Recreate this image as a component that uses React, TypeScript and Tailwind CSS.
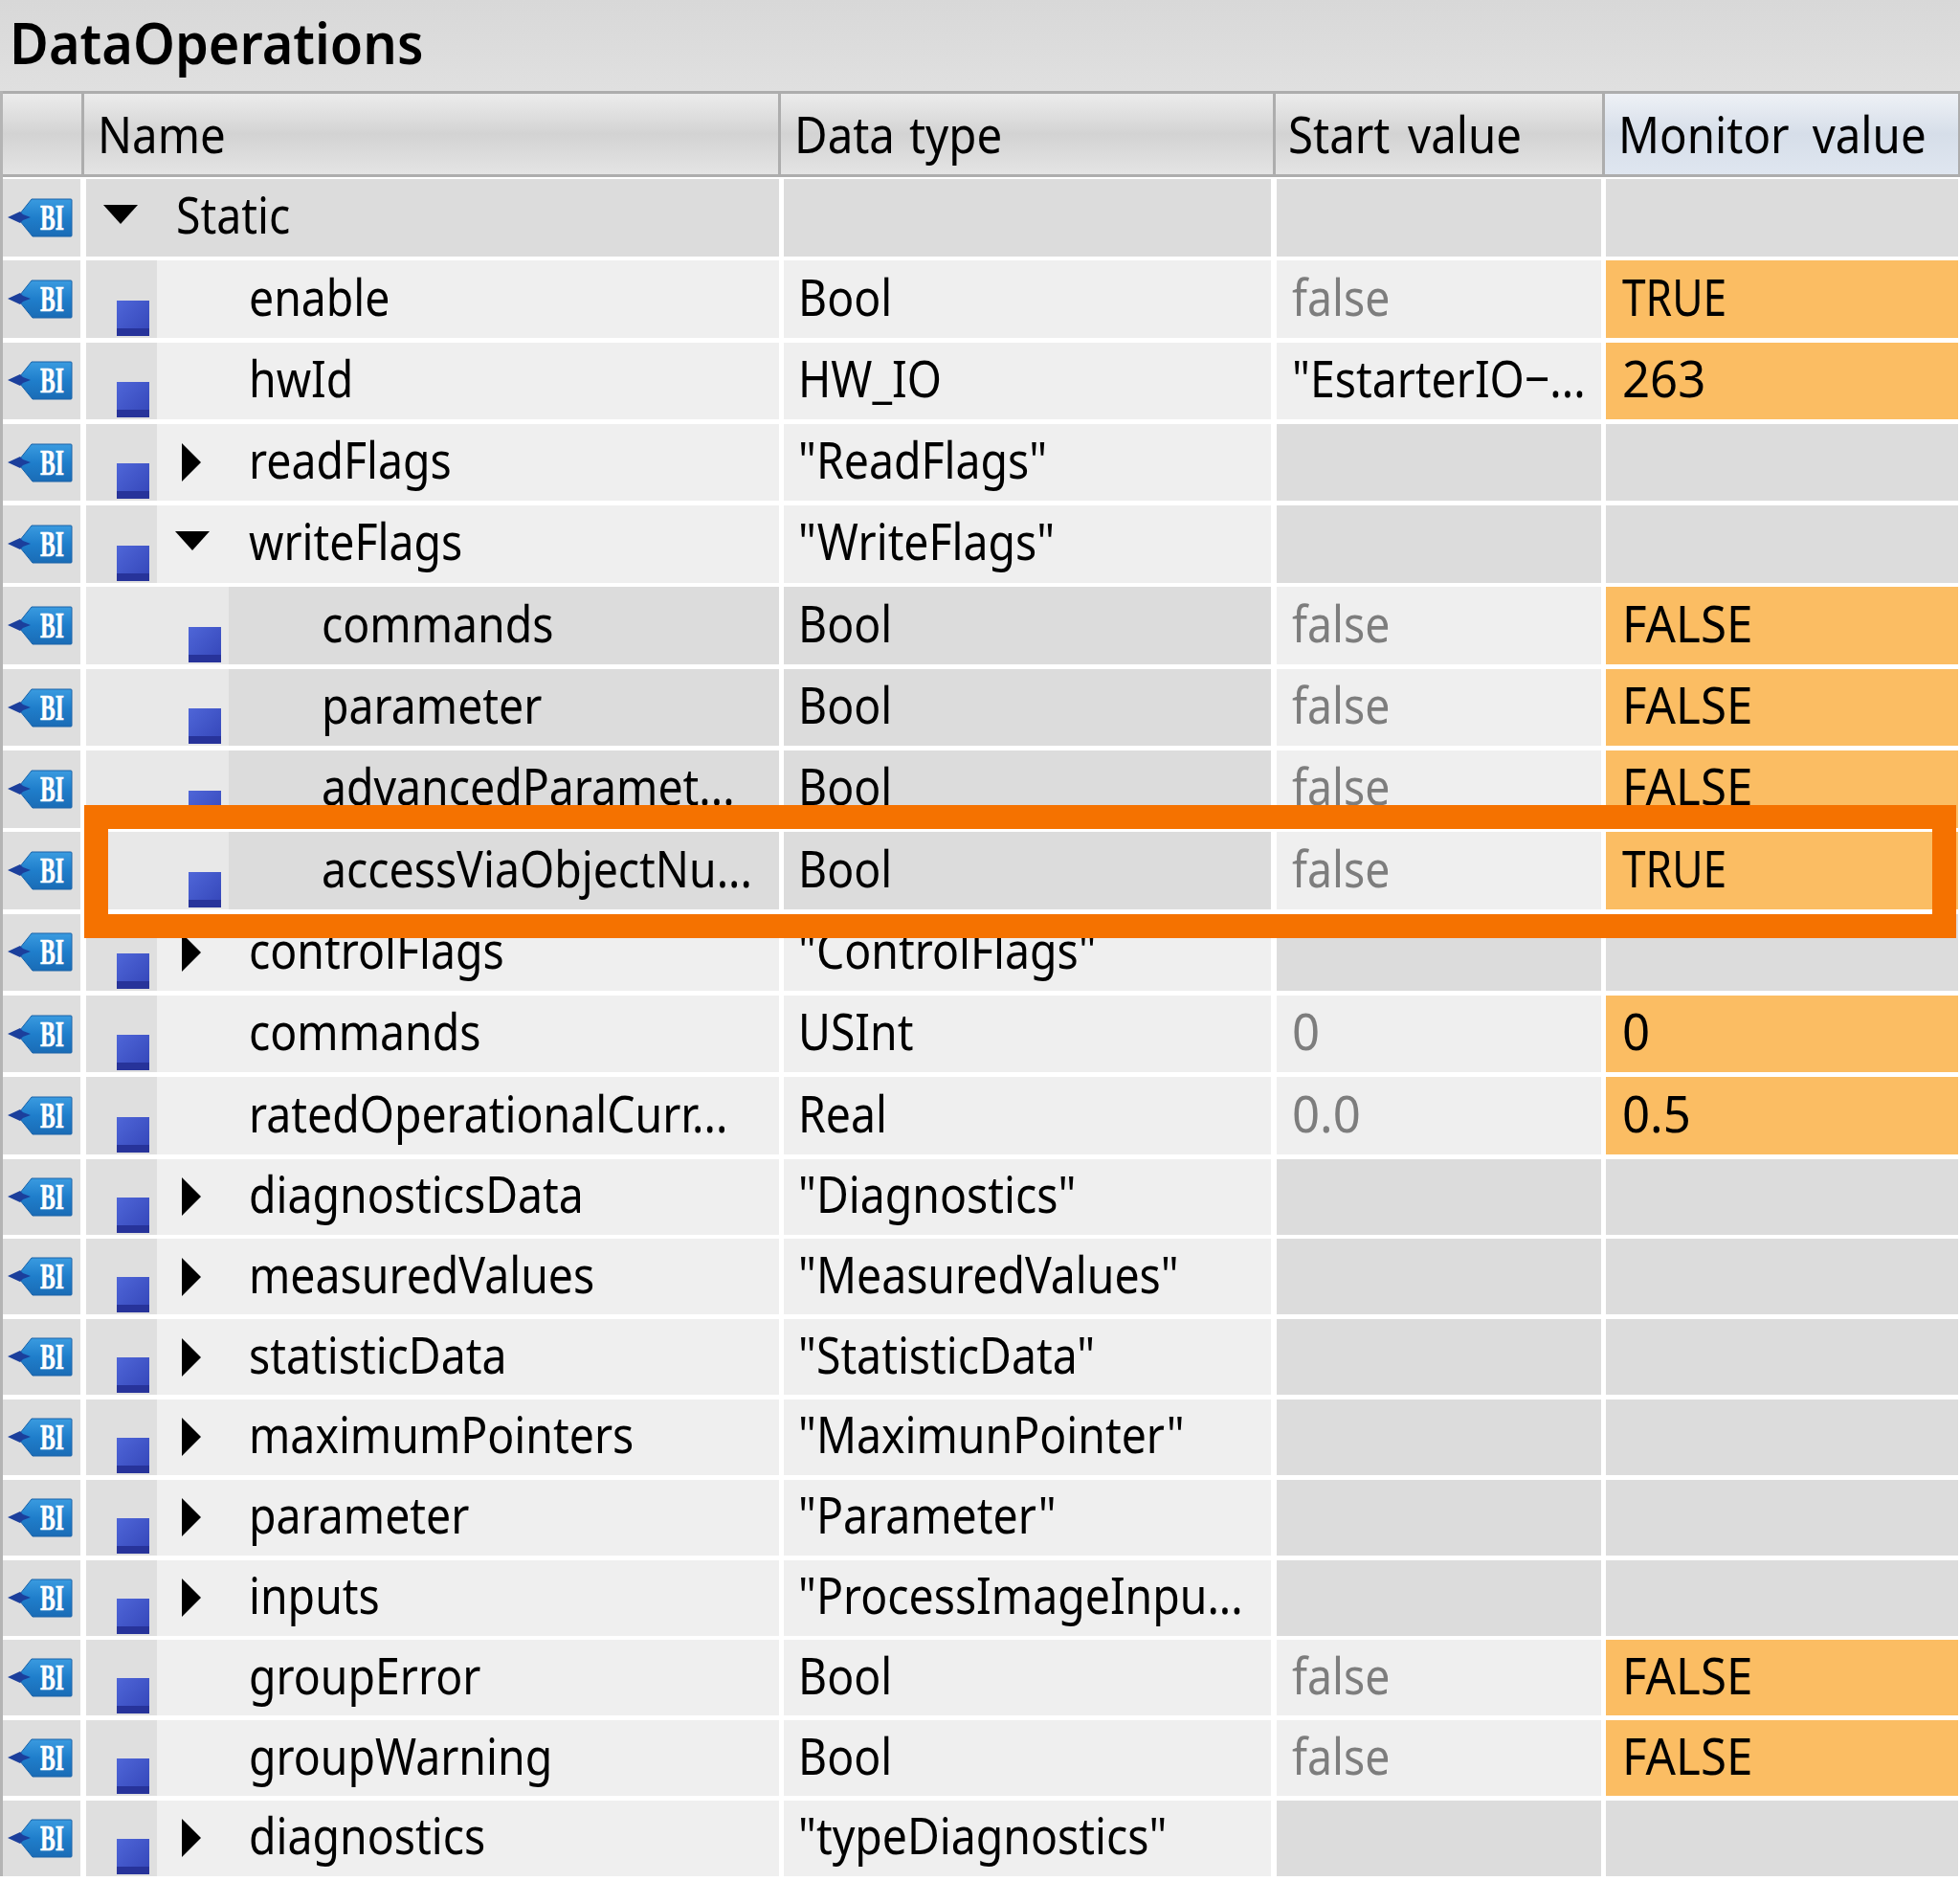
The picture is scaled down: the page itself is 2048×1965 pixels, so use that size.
import { FC } from "react";

interface IRow {
  name: string;
  type?: string;
  start?: string;
  monitor?: string;
  level: 0 | 1 | 2;
  arrow?: "down" | "right";
  dim?: boolean;
}

const rows: IRow[] = [
  { name: "Static", level: 0, arrow: "down" },
  { name: "enable", type: "Bool", start: "false", monitor: "TRUE", level: 1, dim: true },
  { name: "hwId", type: "HW_IO", start: '"EstarterIO−...', monitor: "263", level: 1 },
  { name: "readFlags", type: '"ReadFlags"', level: 1, arrow: "right" },
  { name: "writeFlags", type: '"WriteFlags"', level: 1, arrow: "down" },
  { name: "commands", type: "Bool", start: "false", monitor: "FALSE", level: 2, dim: true },
  { name: "parameter", type: "Bool", start: "false", monitor: "FALSE", level: 2, dim: true },
  { name: "advancedParamet...", type: "Bool", start: "false", monitor: "FALSE", level: 2, dim: true },
  { name: "accessViaObjectNu...", type: "Bool", start: "false", monitor: "TRUE", level: 2, dim: true },
  { name: "controlFlags", type: '"ControlFlags"', level: 1, arrow: "right" },
  { name: "commands", type: "USInt", start: "0", monitor: "0", level: 1, dim: true },
  { name: "ratedOperationalCurr...", type: "Real", start: "0.0", monitor: "0.5", level: 1, dim: true },
  { name: "diagnosticsData", type: '"Diagnostics"', level: 1, arrow: "right" },
  { name: "measuredValues", type: '"MeasuredValues"', level: 1, arrow: "right" },
  { name: "statisticData", type: '"StatisticData"', level: 1, arrow: "right" },
  { name: "maximumPointers", type: '"MaximunPointer"', level: 1, arrow: "right" },
  { name: "parameter", type: '"Parameter"', level: 1, arrow: "right" },
  { name: "inputs", type: '"ProcessImageInpu...', level: 1, arrow: "right" },
  { name: "groupError", type: "Bool", start: "false", monitor: "FALSE", level: 1, dim: true },
  { name: "groupWarning", type: "Bool", start: "false", monitor: "FALSE", level: 1, dim: true },
  { name: "diagnostics", type: '"typeDiagnostics"', level: 1, arrow: "right" },
];

const Label: FC<{ text: string; scale?: string; className?: string }> = ({
  text,
  scale = "scale-x-[0.875]",
  className = "",
}) => (
  <span className={`block origin-left whitespace-nowrap pb-[6px] text-[53px] leading-[60px] ${scale} ${className}`}>
    {text}
  </span>
);

// the value font has wider digits and capitals than Noto Sans in places
const valueScale = (text: string) => {
  if (text === "FALSE") return "scale-x-[0.93]";
  if (text === "TRUE") return "scale-x-[0.835]";
  if (/^[0-9.]+$/.test(text)) return "scale-x-[0.96]";
  return "scale-x-[0.875]";
};

const TagIcon = () => (
  <svg width="70" height="42" viewBox="0 0 70 42" className="ml-[4px] mt-[1px]">
    <defs>
      <linearGradient id="tagFill" x1="0" y1="0" x2="0" y2="1">
        <stop offset="0" stopColor="#3a9be0" />
        <stop offset="0.5" stopColor="#1f7ecb" />
        <stop offset="1" stopColor="#1a6cb6" />
      </linearGradient>
    </defs>
    <path d="M26 1H67a1 1 0 0 1 1 1V39a1 1 0 0 1-1 1H27L14 24 12 20 14 16Z" fill="url(#tagFill)" stroke="#1a62a8" strokeWidth="1" />
    <path d="M1 20 14 14 17 17 25 20 17 23 14 26Z" fill="#1b3f9c" />
    <text transform="translate(35 33) scale(0.62 1)" fill="#ffffff" stroke="#ffffff" strokeWidth="0.6" fontFamily="'Liberation Serif', serif" fontWeight="700" fontSize="38">
      BI
    </text>
  </svg>
);

const BlueSquare = () => (
  <div className="flex h-[37px] w-[34px] flex-col bg-gradient-to-br from-[#4f66d8] to-[#3445b8]">
    <div className="mt-auto h-[8px] bg-[#27339a]" />
  </div>
);

const ArrowDown = () => (
  <svg width="36" height="20" viewBox="0 0 36 20">
    <path d="M0 0H36L18 20Z" fill="#000000" />
  </svg>
);

const ArrowRight = () => (
  <svg width="20" height="40" viewBox="0 0 20 40">
    <path d="M0 0 20 20 0 40Z" fill="#000000" />
  </svg>
);

const NameCell: FC<{ row: IRow }> = ({ row }) => {
  if (row.level === 0) {
    return (
      <div className="flex items-center bg-[#dcdcdc]">
        <div className="ml-[18px] mb-[6px] w-[76px]">
          <ArrowDown />
        </div>
        <Label text={row.name} />
      </div>
    );
  }

  const leftColumn = row.level === 1;

  return (
    <div className={`flex ${leftColumn ? "bg-[#efefef]" : "bg-[#dcdcdc]"}`}>
      <div className={`relative shrink-0 ${leftColumn ? "w-[74px] bg-[#dfdfdf]" : "w-[149px] bg-[#e8e8e8]"}`}>
        <div className={`absolute bottom-[2px] ${leftColumn ? "left-[32px]" : "left-[107px]"}`}>
          <BlueSquare />
        </div>
      </div>
      <div className={`flex w-full items-center ${leftColumn ? "pl-[96px]" : "pl-[97px]"}`}>
        {row.arrow === "right" && (
          <div className="absolute ml-[-70px]">
            <ArrowRight />
          </div>
        )}
        {row.arrow === "down" && (
          <div className="absolute ml-[-77px] mb-[6px]">
            <ArrowDown />
          </div>
        )}
        <Label text={row.name} />
      </div>
    </div>
  );
};

const RowView: FC<{ row: IRow; index: number }> = ({ row, index }) => {
  const typeBg = row.level === 0 || row.level === 2 ? "bg-[#dcdcdc]" : "bg-[#efefef]";
  const hasValue = Boolean(row.start);

  return (
    <div
      className={`grid grid-cols-[81px_724px_509px_339px_368px] gap-x-[5.5px] ${
        index < 12 ? "h-[80.5px]" : "h-[79px]"
      }`}
    >
      <div className="bg-[#dedede]">
        <div className="flex h-full items-center">
          <TagIcon />
        </div>
      </div>
      <NameCell row={row} />
      <div className={`flex items-center pl-[15px] ${typeBg}`}>
        {row.type && <Label text={row.type} />}
      </div>
      <div className={`flex items-center pl-[16px] ${hasValue ? "bg-[#efefef]" : "bg-[#dcdcdc]"}`}>
        {row.start && (
          <Label text={row.start} scale={valueScale(row.start)} className={row.dim ? "text-[#7d7d7d]" : ""} />
        )}
      </div>
      <div className={`flex items-center pl-[17px] ${hasValue ? "bg-[#fbbd63]" : "bg-[#dcdcdc]"}`}>
        {row.monitor && <Label text={row.monitor} scale={valueScale(row.monitor)} />}
      </div>
    </div>
  );
};

const headerCell = "flex items-center bg-gradient-to-b from-[#ececec] via-[#d3d3d3] to-[#e4e4e4] pt-[6px]";

export default function App() {
  return (
    <div className="relative h-[1965px] w-[2048px] overflow-hidden bg-white font-['Noto_Sans',sans-serif] text-black">
      <div className="flex h-[95px] items-center bg-gradient-to-b from-[#d8d8d8] to-[#e0e0e0] pl-[10px]">
        <span className="block origin-left scale-x-[0.931] whitespace-nowrap pb-[7px] text-[60px] font-semibold leading-[70px]">
          DataOperations
        </span>
      </div>

      <div className="border-l-[3px] border-[#b4b4b4]">
        <div className="grid h-[90px] grid-cols-[82px_725px_514px_341px_369px] gap-x-[3px] border-y-[3px] border-[#adadad] bg-[#adadad]">
          <div className={headerCell} />
          <div className={`${headerCell} pl-[14px]`}>
            <Label text="Name" scale="scale-x-[0.895]" />
          </div>
          <div className={`${headerCell} pl-[14px]`}>
            <Label text="Data type" scale="scale-x-[0.895]" className="[word-spacing:3px]" />
          </div>
          <div className={`${headerCell} pl-[13px]`}>
            <Label text="Start value" scale="scale-x-[0.895]" className="[word-spacing:7px]" />
          </div>
          <div className="flex items-center bg-gradient-to-b from-[#eef1f6] via-[#d6dee9] to-[#dfe6f0] pl-[14px] pt-[6px]">
            <Label text="Monitor value" scale="scale-x-[0.895]" className="[word-spacing:13px]" />
          </div>
        </div>

        <div className="mt-[2px] flex flex-col gap-y-[4.8px]">
          {rows.map((row, index) => (
            <RowView key={index} row={row} index={index} />
          ))}
        </div>
      </div>

      {/* highlight frame around the accessVia row */}
      <div className="absolute left-[88px] top-[841px] h-[139px] w-[1956px] border-[25px] border-[#f57200]" />
    </div>
  );
}
